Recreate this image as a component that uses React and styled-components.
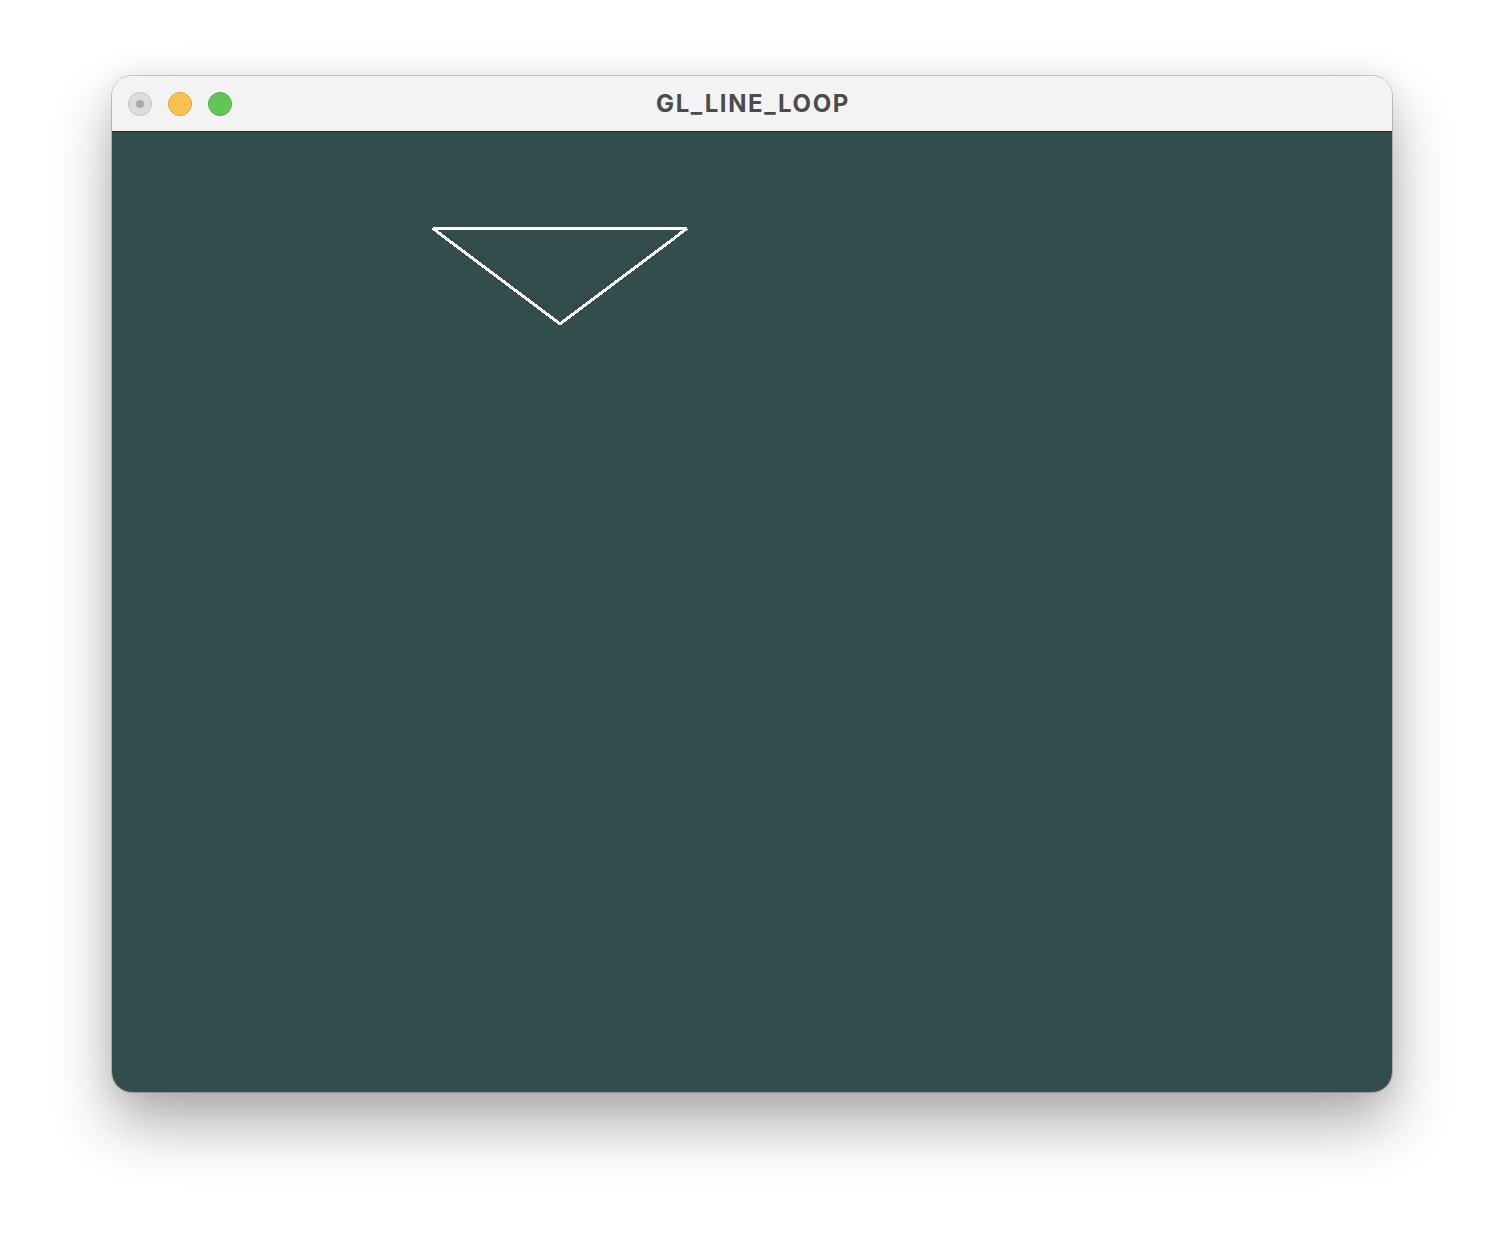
import React from "react";
import styled, { createGlobalStyle } from "styled-components";

const Global = createGlobalStyle`
  html, body { margin: 0; padding: 0; background: #ffffff; }
  body { font-family: "Inter", "Liberation Sans", sans-serif; }
`;

const Page = styled.div`
  width: 1504px;
  height: 1240px;
  padding: 76px 0 0 112px;
  box-sizing: border-box;
  overflow: hidden;
`;

const Window = styled.div`
  width: 1280px;
  display: flex;
  flex-direction: column;
  border-radius: 20px;
  overflow: hidden;
  box-shadow: 0 0 0 1px rgba(0, 0, 0, 0.18), 0 32px 60px rgba(0, 0, 0, 0.32),
    0 0 30px rgba(0, 0, 0, 0.08);
`;

const TitleBar = styled.div`
  height: 55px;
  background: #f3f3f3;
  border-bottom: 1px solid #1e2e2e;
  display: flex;
  align-items: center;
  position: relative;
  padding-left: 16px;
`;

const Lights = styled.div`
  display: flex;
  gap: 16px;
`;

const Light = styled.div`
  width: 24px;
  height: 24px;
  border-radius: 50%;
  box-sizing: border-box;
  background: ${(p) => p.$bg};
  border: 1px solid ${(p) => p.$border};
  display: flex;
  align-items: center;
  justify-content: center;
`;

const Dot = styled.div`
  width: 8px;
  height: 8px;
  border-radius: 50%;
  background: #ababab;
`;

const Title = styled.div`
  position: absolute;
  left: 0;
  right: 0;
  top: 0;
  bottom: 0;
  display: flex;
  align-items: center;
  justify-content: center;
  padding-left: 2px;
  font-family: "Inter", "Liberation Sans", sans-serif;
  font-weight: 700;
  font-size: 24px;
  color: #4b4b4b;
  letter-spacing: 1.6px;
  pointer-events: none;
`;

const Canvas = styled.div`
  height: 960px;
  background: #334d4d;
  display: flex;
`;

const Drawing = styled.svg`
  display: block;
`;

export default function App() {
  return (
    <>
      <Global />
      <Page>
        <Window>
          <TitleBar>
            <Lights>
              <Light $bg="#dcdcdc" $border="#c4c4c4">
                <Dot />
              </Light>
              <Light $bg="#f7c250" $border="#e0a93a" />
              <Light $bg="#62c655" $border="#4fae43" />
            </Lights>
            <Title>GL_LINE_LOOP</Title>
          </TitleBar>
          <Canvas>
            <Drawing width="1280" height="960" viewBox="0 0 1280 960">
              <polygon
                points="321,96.5 575,96.5 448,192"
                fill="none"
                stroke="#ffffff"
                strokeWidth="3"
                strokeLinejoin="bevel"
                shapeRendering="crispEdges"
              />
            </Drawing>
          </Canvas>
        </Window>
      </Page>
    </>
  );
}
